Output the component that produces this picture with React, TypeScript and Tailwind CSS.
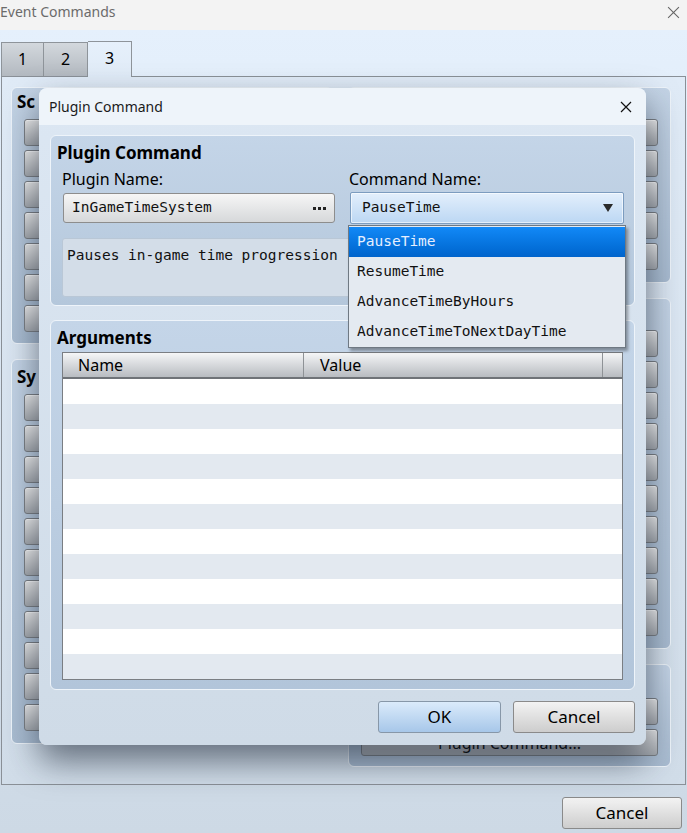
import React from "react";

const UI = "font-['Noto_Sans',sans-serif]";
const MONO = "font-['DejaVu_Sans_Mono',monospace]";

function XIcon({ size, color, stroke = 1.2 }: { size: number; color: string; stroke?: number }) {
  return (
    <svg width={size} height={size} viewBox="0 0 12 12">
      <path d="M1 1 L11 11 M11 1 L1 11" stroke={color} strokeWidth={stroke} fill="none" />
    </svg>
  );
}

function SmallBtn({ label }: { label?: string }) {
  return (
    <div className="h-[27px] shrink-0 rounded-[3px] border border-[#7b7f84] bg-gradient-to-b from-[#eeeeee] to-[#a7abb0] shadow-[inset_0_1px_0_rgba(255,255,255,0.85)] flex items-center justify-center text-[16px] text-black">
      {label}
    </div>
  );
}

function BgGroup({
  label,
  count,
  height,
  labelH,
  labels = [],
}: {
  label: string;
  count: number;
  height: number;
  labelH: string;
  labels?: string[];
}) {
  return (
    <div
      className="rounded-[6px] border border-[#eef4fa] bg-gradient-to-b from-[#c4d4e6] to-[#a9bcd1] px-[12px] flex flex-col"
      style={{ height }}
    >
      <div className={`${labelH} -ml-[7px] leading-[24px] text-[17px] font-bold text-black`}>{label}</div>
      <div className="flex flex-col gap-[4px]">
        {Array.from({ length: count }).map((_, i) => (
          <SmallBtn key={i} label={labels[i]} />
        ))}
      </div>
    </div>
  );
}

export default function App() {
  const rows = Array.from({ length: 12 });
  return (
    <div className={`${UI} w-[687px] h-[833px] relative overflow-hidden flex flex-col bg-[#f3f3f3]`}>
      {/* Outer title bar */}
      <div className="h-[30px] shrink-0 flex items-center justify-between bg-[#f3f3f3]">
        <span className="text-[14px] text-[#6b6b6b] leading-none -mt-[6px]">Event Commands</span>
        <div className="mr-[7px] -mt-[6px]">
          <XIcon size={13} color="#666" stroke={1} />
        </div>
      </div>

      {/* Body */}
      <div className="flex-1 flex flex-col bg-gradient-to-b from-[#e5f0fc] to-[#cdd9e5] pt-[11px]">
        {/* Tabs */}
        <div className="h-[35px] flex items-end pl-[1px]">
          <div className="w-[43px] h-[34px] border border-b-0 border-[#8e949a] bg-gradient-to-b from-[#d3d8dd] to-[#b3b9c0] flex items-center justify-center text-[16px] text-black pb-[2px]">
            1
          </div>
          <div className="w-[44px] h-[34px] border border-b-0 border-l-0 border-[#8e949a] bg-gradient-to-b from-[#d3d8dd] to-[#b3b9c0] flex items-center justify-center text-[16px] text-black pb-[2px]">
            2
          </div>
          <div className="relative z-10 w-[44px] h-[36px] -mb-[1px] border border-b-0 border-l-0 border-[#8e949a] bg-gradient-to-b from-[#e6f0fb] to-[#e0ebf7] flex items-center justify-center text-[16px] text-black pb-[4px]">
            3
          </div>
        </div>

        {/* Tab pane */}
        <div className="mx-[1px] h-[709px] shrink-0 border border-[#8a9097] bg-gradient-to-b from-[#e0ebf7] to-[#d1dde9] pl-[9px] pt-[10px]">
          <div className="grid grid-cols-[322px_323px] gap-x-[15px]">
            <div className="flex flex-col gap-[15px]">
              <BgGroup label="Sc" count={7} height={257} labelH="h-[31px] pt-[2px]" />
              <BgGroup label="Sy" count={11} height={385} labelH="h-[34px] pt-[5px]" />
            </div>
            <div className="flex flex-col gap-[15px]">
              <BgGroup label="" count={5} height={196} labelH="h-[31px]" />
              <BgGroup label="" count={10} height={351} labelH="h-[31px]" />
              <BgGroup label="" count={2} height={103} labelH="h-[33px]" labels={["", "Plugin Command..."]} />
            </div>
          </div>
        </div>

        {/* Bottom bar */}
        <div className="flex-1 flex justify-end items-start pt-[12px] pr-[5px]">
          <div className="w-[120px] h-[32px] rounded-[3px] border border-[#8a8a8a] bg-gradient-to-b from-[#f3f3f3] to-[#cdcdcd] flex items-center justify-center text-[17px] text-black">
            Cancel
          </div>
        </div>
      </div>

      {/* Modal dialog */}
      <div className="absolute left-[39px] top-[88px] w-[607px] h-[657px] rounded-[8px] bg-gradient-to-b from-[#dce7f3] to-[#cfdbe7] shadow-[0_16px_34px_rgba(25,35,50,0.6)] z-20 flex flex-col">
        <div className="h-[37px] shrink-0 rounded-t-[8px] bg-[#eef4fa] flex items-center justify-between pl-[10px] pr-[14px]">
          <span className="text-[14px] text-[#1a1a1a]">Plugin Command</span>
          <XIcon size={12} color="#111" stroke={1.2} />
        </div>
        <div className="flex-1 flex flex-col px-[11px] pt-[10px]">
          {/* Group 1 */}
          <div className="h-[171px] shrink-0 rounded-[6px] border border-[#eef4fa] bg-gradient-to-b from-[#c4d5e8] to-[#b4c7db]">
            <div className="h-[30px] pt-[6px] pl-[6px] leading-[22px] text-[17px] font-bold text-black">Plugin Command</div>
            <div className="px-[11px] grid grid-cols-2 gap-x-[13px]">
              <div className="flex flex-col">
                <div className="h-[26px] leading-[26px] text-[16px] text-black">Plugin Name:</div>
                <div className="h-[32px] flex items-center">
                  <div className="ml-[1px] w-[272px] h-[30px] rounded-[3px] border border-[#8d8d8d] bg-gradient-to-b from-[#f6f6f6] to-[#d6d8da] flex items-center justify-between pl-[8px] pr-[8px]">
                    <span className={`${MONO} text-[14.5px] text-[#111]`}>InGameTimeSystem</span>
                    <svg width="13" height="3" viewBox="0 0 13 3">
                      <rect x="0" y="0" width="3" height="3" fill="#222" />
                      <rect x="5" y="0" width="3" height="3" fill="#222" />
                      <rect x="10" y="0" width="3" height="3" fill="#222" />
                    </svg>
                  </div>
                </div>
              </div>
              <div className="flex flex-col">
                <div className="h-[26px] leading-[26px] text-[16px] text-black">Command Name:</div>
                <div className="relative h-[32px] w-[274px] ml-[1px]">
                  <div className="h-[32px] rounded-[2px] border border-[#7c9cbf] bg-gradient-to-b from-[#e3effc] to-[#bcd7f3] shadow-[inset_0_0_0_1px_rgba(255,255,255,0.6)] flex items-center justify-between pl-[11px] pr-[10px]">
                    <span className={`${MONO} text-[14.5px] text-[#111]`}>PauseTime</span>
                    <svg width="10" height="8" viewBox="0 0 10 8">
                      <path d="M0 0 L10 0 L5 8 Z" fill="#2a2a2a" />
                    </svg>
                  </div>
                  {/* Dropdown list */}
                  <div className="absolute left-[-2px] top-[33px] w-[278px] h-[123px] border border-[#6f7983] bg-[#e4eaf1] shadow-[2px_3px_3px_rgba(0,0,0,0.35)] pt-[1px] z-30">
                    <div className="h-[30px] bg-gradient-to-b from-[#1289f7] to-[#0064cc] flex items-center pl-[8px]">
                      <span className={`${MONO} text-[14.5px] text-[#e6efff]`}>PauseTime</span>
                    </div>
                    {["ResumeTime", "AdvanceTimeByHours", "AdvanceTimeToNextDayTime"].map((t) => (
                      <div key={t} className="h-[30px] flex items-center pl-[8px]">
                        <span className={`${MONO} text-[14.5px] text-[#111]`}>{t}</span>
                      </div>
                    ))}
                  </div>
                </div>
              </div>
            </div>
            <div className="mx-[11px] mt-[14px] h-[59px] rounded-[3px] border border-[#b9c7d6] bg-[#d3dde8] pl-[4px] pt-[6px]">
              <div className={`${MONO} text-[14.5px] leading-[20px] text-[#111]`}>Pauses in-game time progression</div>
            </div>
          </div>

          {/* Group 2 */}
          <div className="mt-[14px] h-[370px] shrink-0 rounded-[6px] border border-[#eef4fa] bg-gradient-to-b from-[#c4d5e8] to-[#b2c5da] flex flex-col">
            <div className="h-[31px] pt-[6px] pl-[6px] leading-[22px] text-[17px] font-bold text-black">Arguments</div>
            <div className="mx-[11px] h-[328px] border border-[#7a7e83] bg-white overflow-hidden flex flex-col">
              <div className="h-[26px] shrink-0 border-b-2 border-[#6f7378] bg-gradient-to-b from-[#f5f6f7] to-[#b8bcc1] flex text-[16px] text-black">
                <div className="w-[241px] border-r border-[#8e9296] pl-[15px] leading-[25px]">Name</div>
                <div className="w-[299px] border-r border-[#8e9296] pl-[16px] leading-[25px]">Value</div>
                <div className="flex-1"></div>
              </div>
              {rows.map((_, i) => (
                <div key={i} className={`h-[25px] shrink-0 ${i % 2 === 0 ? "bg-white" : "bg-[#e3e9f0]"}`}></div>
              ))}
            </div>
          </div>

          {/* Buttons */}
          <div className="mt-[11px] flex justify-end gap-[12px]">
            <div className="w-[123px] h-[32px] rounded-[3px] border border-[#8797a8] bg-gradient-to-b from-[#dbebfb] to-[#a7c7e9] flex items-center justify-center text-[17px] text-black">
              OK
            </div>
            <div className="w-[122px] h-[32px] rounded-[3px] border border-[#8a8a8a] bg-gradient-to-b from-[#f3f3f3] to-[#cdcdcd] flex items-center justify-center text-[17px] text-black">
              Cancel
            </div>
          </div>
        </div>
      </div>
    </div>
  );
}
